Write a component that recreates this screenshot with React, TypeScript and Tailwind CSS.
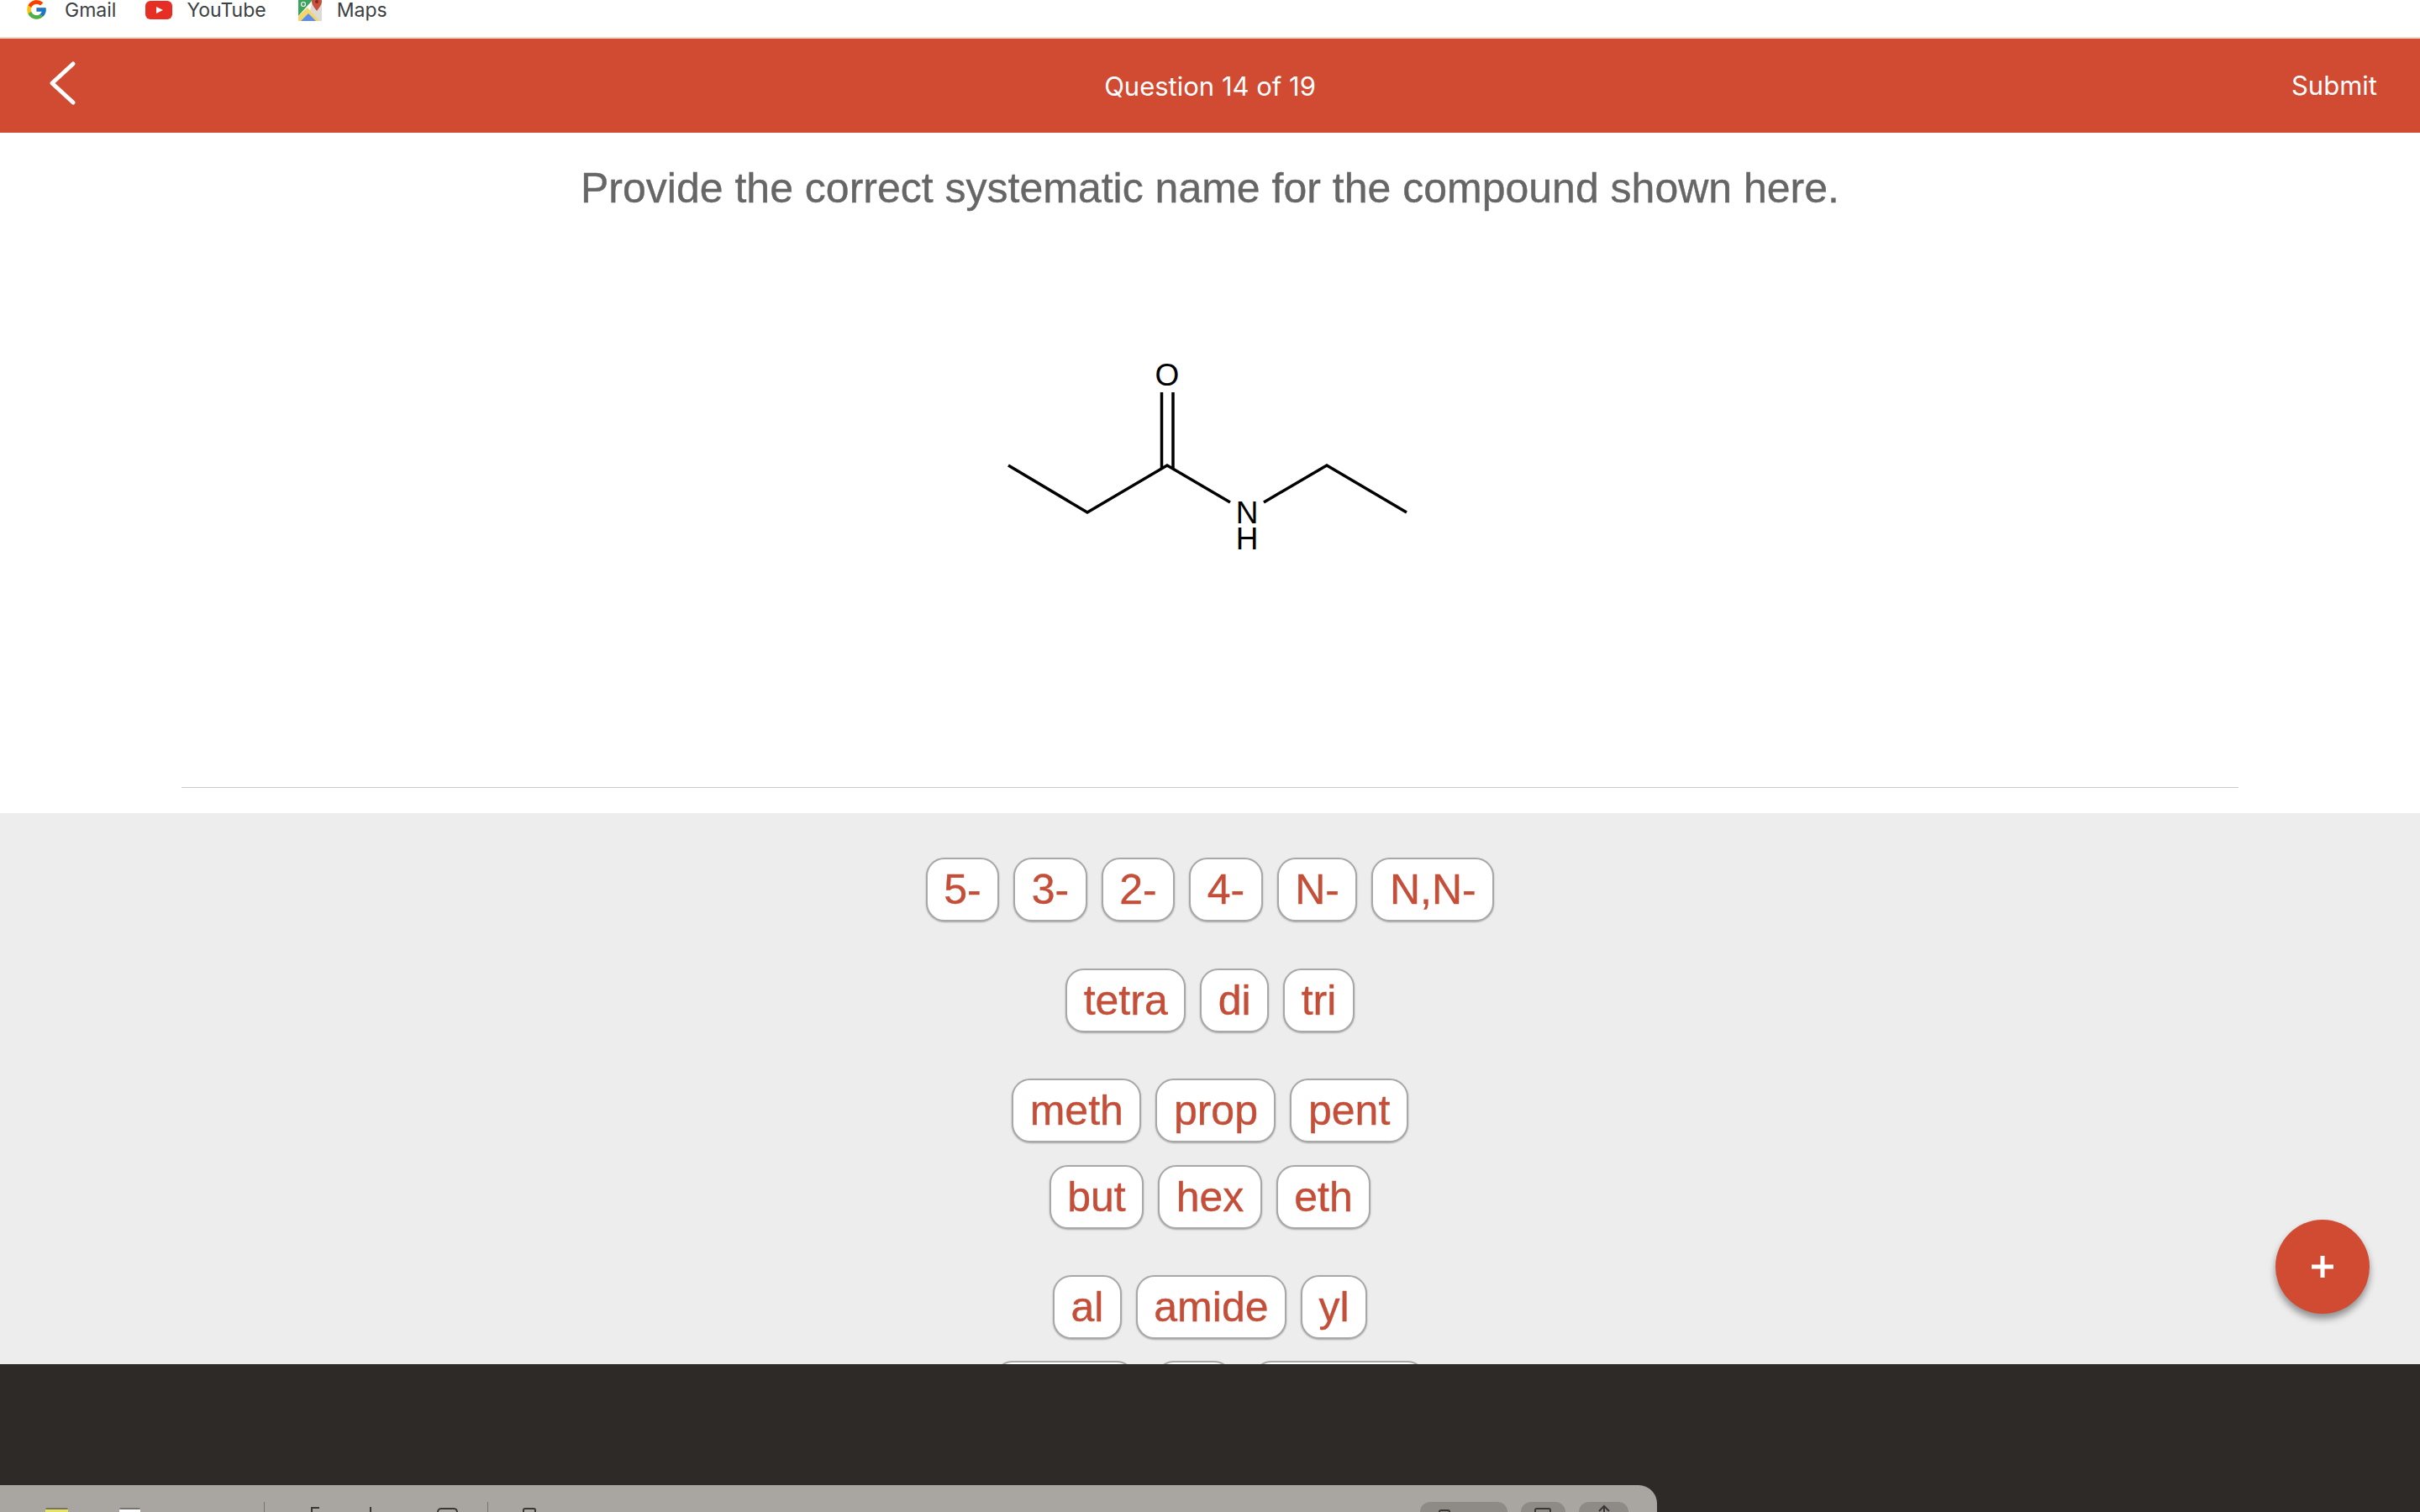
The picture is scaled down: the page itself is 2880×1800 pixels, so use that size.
import { FcGoogle } from "react-icons/fc";

const chipRows: { labels: string[]; mb: string }[] = [
  { labels: ["5-", "3-", "2-", "4-", "N-", "N,N-"], mb: "mb-[56px]" },
  { labels: ["tetra", "di", "tri"], mb: "mb-[55px]" },
  { labels: ["meth", "prop", "pent"], mb: "mb-[27px]" },
  { labels: ["but", "hex", "eth"], mb: "mb-[55px]" },
  { labels: ["al", "amide", "yl"], mb: "mb-[26px]" },
];

function Chip({ label }: { label: string }) {
  return (
    <button
      type="button"
      className="h-[76px] rounded-[22px] border-2 border-[#a8a8a8] bg-white px-[19.5px] text-[50px] leading-none text-[#c44e38] shadow-[0_1px_2px_rgba(0,0,0,0.3)] [-webkit-text-stroke:0.4px_#c44e38]"
    >
      {label}
    </button>
  );
}

function YouTubeIcon() {
  return (
    <svg width="32" height="22" viewBox="0 0 32 22">
      <rect width="32" height="22" rx="6" fill="#e62e24" />
      <path d="M13 7l8 4-8 4z" fill="#fff" />
    </svg>
  );
}

function MapsIcon() {
  return (
    <svg width="28" height="25" viewBox="0 0 28 25">
      <path d="M0 0h17L0 19z" fill="#3ba55d" />
      <path d="M17 0h11v25h-4L14 13z" fill="#dcdad3" />
      <path d="M0 19L11 9l14 16H0z" fill="#f2d66b" />
      <path d="M3 25l9-9 9 9z" fill="#5b8def" />
      <path d="M22 -4c-4 0-6 3-6 6 0 4 6 11 6 11s6-7 6-11c0-3-2-6-6-6z" fill="#c8503d" />
      <circle cx="22" cy="2" r="2" fill="#7d2a1e" />
      <circle cx="6" cy="5" r="2.5" fill="none" stroke="#fff" strokeWidth="1.2" />
    </svg>
  );
}

function Molecule() {
  return (
    <svg width="500" height="250" viewBox="1190 420 500 250" className="mx-auto mt-[166px] block" fill="none">
      <g className="stroke-black" strokeWidth="3.5">
        <polyline points="1200,554 1294,610 1389,554 1464,598" />
        <polyline points="1504,598 1579,554 1674,610" />
        <line x1="1382.5" y1="467" x2="1382.5" y2="557" />
        <line x1="1396" y1="467" x2="1396" y2="557" />
      </g>
      <g fill="#000" stroke="none" fontFamily="Liberation Sans, sans-serif" fontSize="37" textAnchor="middle">
        <text x="1389" y="459">O</text>
        <text x="1484" y="623">N</text>
        <text x="1484" y="654">H</text>
      </g>
    </svg>
  );
}

export default function App() {
  return (
    <div className="relative flex h-[1800px] w-[2880px] flex-col overflow-hidden bg-white font-['Liberation_Sans',sans-serif]">
      {/* browser bookmarks */}
      <div className="flex h-[46px] shrink-0 items-start border-b-2 border-[#f0d9cc] pl-[30px] font-['Inter',sans-serif] text-[23px] leading-[24px] text-[#3c4043]">
        <FcGoogle className="-mt-[2px] h-[27px] w-[27px]" />
        <span className="ml-[20px]">Gmail</span>
        <span className="ml-[35px] mt-[1px]"><YouTubeIcon /></span>
        <span className="ml-[17px]">YouTube</span>
        <span className="ml-[38px]"><MapsIcon /></span>
        <span className="ml-[18px]">Maps</span>
      </div>

      {/* app header */}
      <header className="relative flex h-[112px] shrink-0 items-center justify-between bg-[#d14b33] pl-[56px] pr-[51px] font-['Inter',sans-serif] text-[31px] text-white">
        <svg width="40" height="56" viewBox="0 0 40 56" fill="none" stroke="#fff" strokeWidth="5" strokeLinecap="round" strokeLinejoin="round" className="-mt-[6px]">
          <path d="M31 5L6 28l25 23" />
        </svg>
        <span className="absolute left-1/2 top-[34px] -translate-x-1/2">Question 14 of 19</span>
        <span>Submit</span>
      </header>

      {/* question */}
      <section className="flex h-[810px] shrink-0 flex-col">
        <h1 className="mt-[36px] text-center text-[50px] font-normal leading-[60px] text-[#666666] [-webkit-text-stroke:0.4px_#666666]">
          Provide the correct systematic name for the compound shown here.
        </h1>
        <Molecule />
        <div className="mx-[216px] mb-[30px] mt-auto h-px bg-[#c9c9c9]" />
      </section>

      {/* answer chips */}
      <section className="min-h-0 flex-1 overflow-hidden bg-[#ededed] pt-[53px]">
        {chipRows.map((row) => (
          <div key={row.labels[0]} className={`flex justify-center gap-[17px] ${row.mb}`}>
            {row.labels.map((label) => (
              <Chip key={label} label={label} />
            ))}
          </div>
        ))}
        <div className="flex justify-center gap-[24px]">
          <div className="h-[76px] w-[168px] rounded-[22px] border-2 border-[#a8a8a8] bg-white" />
          <div className="h-[76px] w-[92px] rounded-[22px] border-2 border-[#a8a8a8] bg-white" />
          <div className="h-[76px] w-[206px] rounded-[22px] border-2 border-[#a8a8a8] bg-white" />
        </div>
      </section>

      {/* dark window backdrop with the cut-off toolbar */}
      <footer className="flex h-[176px] shrink-0 flex-col justify-end bg-[#2d2a28]">
        <div className="flex h-[32px] w-[1972px] items-start rounded-tr-[22px] bg-[#a9a6a1] pt-[20px]">
          <span className="ml-[54px] mt-[7px] h-[5px] w-[27px] rounded-t-[2px] border-t-2 border-[#77735f] bg-[#e6e264]" />
          <span className="ml-[61px] mt-[7px] h-[5px] w-[25px] rounded-t-[2px] border-t-2 border-[#77736f] bg-white" />
          <span className="ml-[147px] h-[12px] w-px bg-[#77736f]" />
          <span className="ml-[55px] mt-[6px] h-[6px] w-[10px] border-l-2 border-t-2 border-[#3a3735]" />
          <span className="ml-[60px] mt-[6px] h-[6px] w-[2px] bg-[#3a3735]" />
          <span className="ml-[78px] mt-[7px] h-[5px] w-[25px] rounded-t-[5px] border-2 border-b-0 border-[#3a3735]" />
          <span className="ml-[35px] h-[12px] w-px bg-[#77736f]" />
          <span className="ml-[41px] mt-[7px] h-[5px] w-[16px] rounded-t-[3px] border-2 border-b-0 border-[#3a3735]" />
          <div className="ml-auto flex items-start gap-[16px] pr-[34px]">
            <span className="h-[12px] w-[104px] rounded-t-[12px] bg-[#8e8b86] pl-[22px] pt-[9px]">
              <span className="block h-[3px] w-[14px] rounded-t-[3px] border-2 border-b-0 border-[#3a3735]" />
            </span>
            <span className="h-[12px] w-[53px] rounded-t-[12px] bg-[#8e8b86] pl-[16px] pt-[7px]">
              <span className="block h-[5px] w-[20px] rounded-t-[3px] border-2 border-b-0 border-[#3a3735]" />
            </span>
            <span className="flex h-[12px] w-[59px] justify-center overflow-hidden rounded-t-[12px] bg-[#8e8b86] pt-[3px]">
              <svg width="18" height="12" viewBox="0 0 18 12" fill="none" stroke="#3a3735" strokeWidth="2">
                <path d="M3 8l6-6 6 6M9 2v10" />
              </svg>
            </span>
          </div>
        </div>
      </footer>

      {/* floating add button */}
      <button
        type="button"
        className="absolute left-[2708px] top-[1452px] flex h-[112px] w-[112px] items-center justify-center rounded-full bg-[#d14b33] shadow-[0_6px_8px_rgba(0,0,0,0.4)]"
      >
        <svg width="26" height="26" viewBox="0 0 26 26" fill="#fff">
          <rect x="10.5" width="5" height="26" />
          <rect y="10.5" width="26" height="5" />
        </svg>
      </button>
    </div>
  );
}
